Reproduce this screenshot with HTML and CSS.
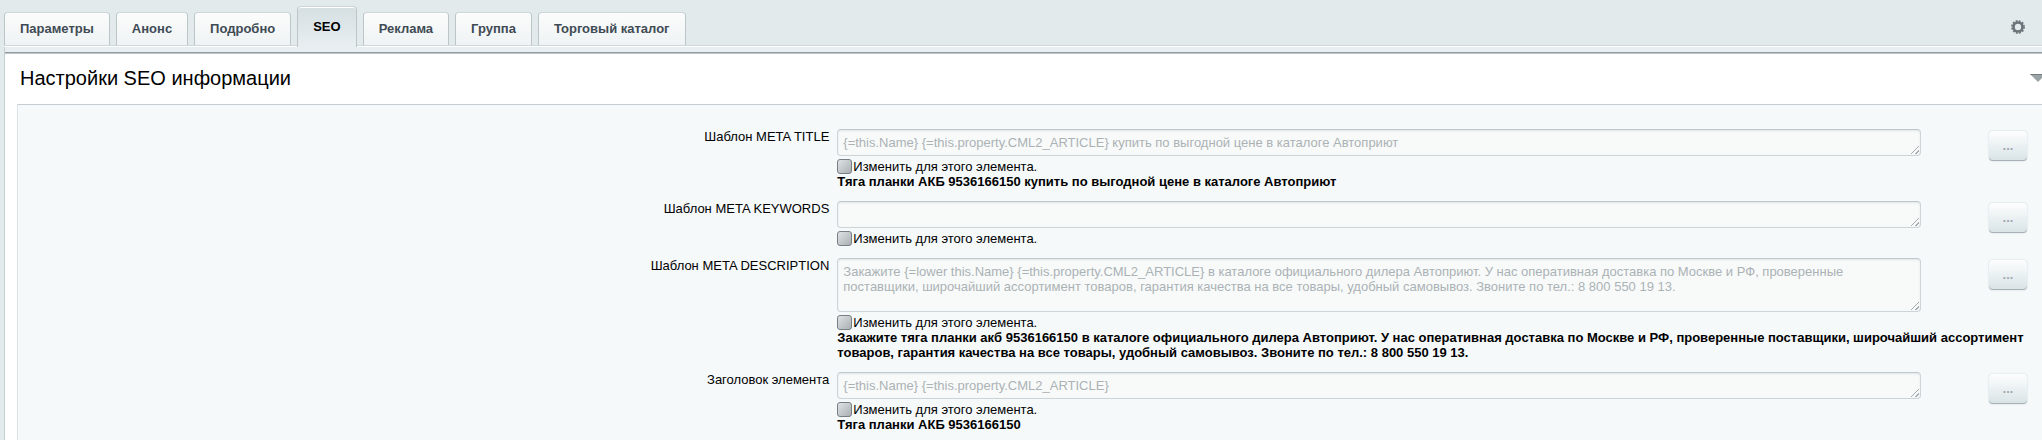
FILE: index.html
```
<!DOCTYPE html>
<html lang="ru">
<head>
    <meta charset="UTF-8">
    <meta name="viewport" content="width=device-width, initial-scale=1.0">
    <title>Настройки SEO</title>
    <link rel="stylesheet" href="styles.css">
</head>
<body>
    <div class="tabs-block">
        <div class="tabs" role="tablist">
            <button type="button" class="tab" role="tab">Параметры</button>
            <button type="button" class="tab" role="tab">Анонс</button>
            <button type="button" class="tab" role="tab">Подробно</button>
            <button type="button" class="tab tab-active" role="tab" aria-selected="true">SEO</button>
            <button type="button" class="tab" role="tab">Реклама</button>
            <button type="button" class="tab" role="tab">Группа</button>
            <button type="button" class="tab" role="tab">Торговый каталог</button>
        </div>
        <button type="button" class="settings-btn" aria-label="Настроить">
            <svg width="14" height="14" viewBox="0 0 14 14">
                <circle cx="7" cy="7" r="4.5" fill="none" stroke="#6b7379" stroke-width="2.6"/>
                <circle cx="7" cy="7" r="6.1" fill="none" stroke="#6b7379" stroke-width="1.6" stroke-dasharray="1.9 1.3"/>
            </svg>
        </button>
    </div>
    <main class="panel">
        <div class="panel-title">
            <h1>Настройки SEO информации</h1>
            <button type="button" class="collapse-btn" aria-label="Свернуть">
                <svg width="16" height="8" viewBox="0 0 16 8">
                    <path d="M0 0h16L8 8z" fill="#9aa3a6"/>
                    <path d="M0 0h16l-1 1H1z" fill="#747c7f"/>
                </svg>
            </button>
        </div>
        <form class="seo-form">
            <div class="row">
                <label class="row-label" for="meta-title">Шаблон META TITLE</label>
                <div class="field">
                    <textarea id="meta-title" rows="1" readonly>{=this.Name} {=this.property.CML2_ARTICLE} купить по выгодной цене в каталоге Автоприют</textarea>
                    <button type="button" class="menu-btn">...</button>
                    <label class="check"><input type="checkbox">Изменить для этого элемента.</label>
                    <b class="result">Тяга планки АКБ 9536166150 купить по выгодной цене в каталоге Автоприют</b>
                </div>
            </div>
            <div class="row">
                <label class="row-label" for="meta-keywords">Шаблон META KEYWORDS</label>
                <div class="field">
                    <textarea id="meta-keywords" rows="1" readonly></textarea>
                    <button type="button" class="menu-btn">...</button>
                    <label class="check"><input type="checkbox">Изменить для этого элемента.</label>
                </div>
            </div>
            <div class="row">
                <label class="row-label" for="meta-description">Шаблон META DESCRIPTION</label>
                <div class="field">
                    <textarea id="meta-description" class="tall" readonly>Закажите {=lower this.Name} {=this.property.CML2_ARTICLE} в каталоге официального дилера Автоприют. У нас оперативная доставка по Москве и РФ, проверенные поставщики, широчайший ассортимент товаров, гарантия качества на все товары, удобный самовывоз. Звоните по тел.: 8 800 550 19 13.</textarea>
                    <button type="button" class="menu-btn">...</button>
                    <label class="check"><input type="checkbox">Изменить для этого элемента.</label>
                    <b class="result">Закажите тяга планки акб 9536166150 в каталоге официального дилера Автоприют. У нас оперативная доставка по Москве и РФ, проверенные поставщики, широчайший ассортимент товаров, гарантия качества на все товары, удобный самовывоз. Звоните по тел.: 8 800 550 19 13.</b>
                </div>
            </div>
            <div class="row">
                <label class="row-label" for="page-title">Заголовок элемента</label>
                <div class="field">
                    <textarea id="page-title" rows="1" readonly>{=this.Name} {=this.property.CML2_ARTICLE}</textarea>
                    <button type="button" class="menu-btn">...</button>
                    <label class="check"><input type="checkbox">Изменить для этого элемента.</label>
                    <b class="result">Тяга планки АКБ 9536166150</b>
                </div>
            </div>
        </form>
    </main>
</body>
</html>
```

FILE: styles.css
```
* {
    box-sizing: border-box;
}
body {
    margin: 0;
    padding-left: 4px;
    min-height: 100vh;
    display: flex;
    flex-direction: column;
    background: #e2eaec;
    color: #000;
    font: 13px/15px "Liberation Sans", Arial, sans-serif;
    overflow-x: hidden;
}
button {
    font: inherit;
    cursor: pointer;
}

/* tabs */
.tabs-block {
    display: flex;
    justify-content: space-between;
    align-items: flex-end;
    padding-top: 6px;
    border-bottom: 1px solid #ced7da;
}
.tabs {
    display: flex;
    align-items: flex-end;
    gap: 6px;
}
.tab {
    height: 33px;
    padding: 0 15px 2px;
    border: 1px solid #bcc6c9;
    border-top-color: #ccd5d7;
    border-bottom: 0;
    border-radius: 4px 4px 0 0;
    background: linear-gradient(#fbfcfc, #eff3f4);
    box-shadow: inset 0 1px 0 #fff;
    color: #3f4b54;
    font-weight: bold;
}
.tab-active {
    z-index: 1;
    height: 41px;
    margin-bottom: -2px;
    background: linear-gradient(#d5dfe2, #e9eef1);
    color: #000;
}
.settings-btn {
    display: flex;
    margin: 0 17px 11px 0;
    padding: 0;
    border: 0;
    background: none;
}

/* panel */
.panel {
    flex: 1;
    display: flex;
    flex-direction: column;
    border-top: 1px solid #fff;
    background: #fff;
}
.panel-title {
    display: flex;
    justify-content: space-between;
    align-items: center;
    height: 57px;
    padding: 5px 0 0 15px;
    border-left: 1px solid #c5ced1;
    background: linear-gradient(#e9eef1 5px, #929b9f 5px, #929b9f 6px, #c0c7ca 6px, #c0c7ca 7px, #fff 7px);
}
.panel-title h1 {
    margin: 0;
    font-size: 20px;
    line-height: 24px;
    font-weight: normal;
}
.collapse-btn {
    display: flex;
    margin-right: -4px;
    padding: 0;
    border: 0;
    background: none;
}
.seo-form {
    flex: 1;
    margin-left: 13px;
    padding: 24px 1px 0 0;
    border-top: 1px solid #c4ced2;
    border-left: 1px solid #dce3e5;
    background: #f5f9fa;
    box-shadow: -12px 0 0 #fff, -13px 0 0 #c5ced1;
}

/* form rows */
.row {
    display: grid;
    grid-template-columns: 81fr 119fr;
    padding-bottom: 12px;
}
.row-label {
    padding-right: 8px;
    text-align: right;
}
.field {
    display: grid;
    grid-template-columns: 9fr 1fr;
    align-items: start;
}
textarea {
    display: block;
    width: 100%;
    height: 27px;
    padding: 5px;
    border: 1px solid #ccd4d8;
    border-top-color: #c0c8cc;
    border-radius: 4px;
    background: #f8fafa;
    box-shadow: inset 0 1px 2px #dfe5e7;
    color: #abb2b5;
    font: inherit;
    overflow: hidden;
}
textarea::-webkit-resizer {
    background: linear-gradient(135deg, transparent 48%, #a5acaf 48%, #a5acaf 56%, transparent 56%, transparent 74%, #a5acaf 74%, #a5acaf 82%, transparent 82%) 6px 6px / 8px 8px no-repeat;
}
textarea.tall {
    height: 54px;
}
.menu-btn {
    grid-column: 2;
    grid-row: 1 / 3;
    justify-self: end;
    width: 38px;
    height: 30px;
    margin: 2px 14px 0 0;
    padding: 0 0 2px;
    border: 0;
    border-radius: 4px;
    background: linear-gradient(#fdfefe, #d8e3e6);
    box-shadow: 0 0 2px #c8d0d3, inset 0 -1px 0 #a8b2b6;
    color: #a4a8b2;
    font-weight: bold;
}
.check {
    display: flex;
    align-items: center;
    grid-column: 1;
    margin-top: 3px;
    gap: 1px;
}
.check input {
    appearance: none;
    width: 15px;
    height: 15px;
    margin: 0;
    border: 1px solid #777f84;
    border-radius: 3px;
    background: linear-gradient(135deg, #dfe3e5, #a9afb3);
}
.result {
    grid-column: 1 / 3;
}
```
